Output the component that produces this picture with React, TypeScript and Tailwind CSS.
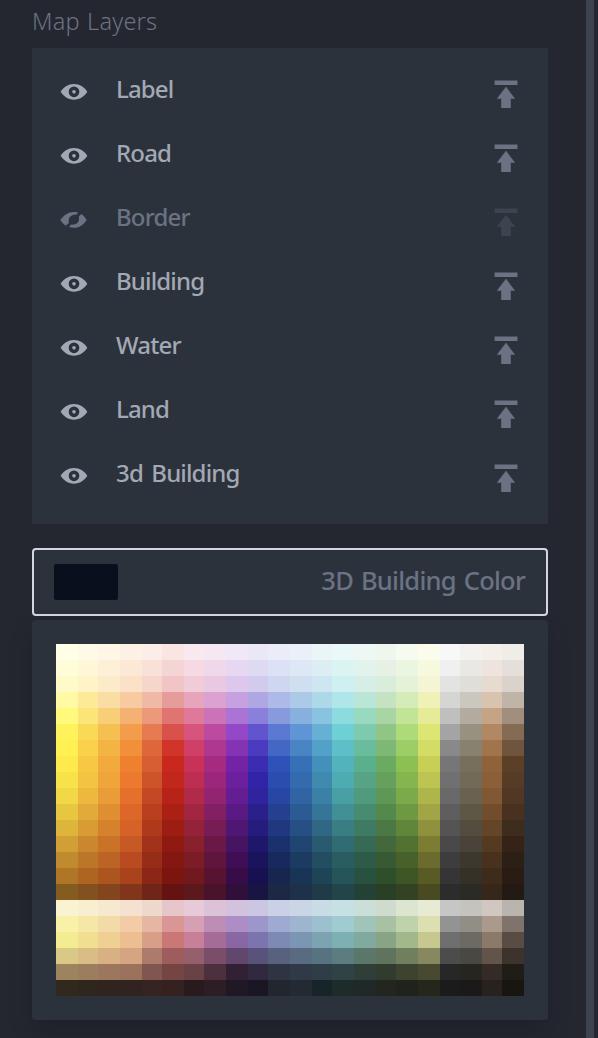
type Layer = { name: string; visible: boolean };

const layers: Layer[] = [
  { name: 'Label', visible: true },
  { name: 'Road', visible: true },
  { name: 'Border', visible: false },
  { name: 'Building', visible: true },
  { name: 'Water', visible: true },
  { name: 'Land', visible: true },
  { name: '3d Building', visible: true },
];

// One string per palette row, 22 colors each.
const palette: string[] = [
  'fffee7 fffae7 fff6e5 fdf1e6 fbede7 f9e6e3 f9e8ee f5e8f2 f0e8f6 eae8f6 eaecf8 e9f0f8 e9f5f7 e9f8f9 edf7f4 eff6ee f5fbef fbfcec f8f8f8 f3f2ee f5efea f0ece8',
  'fffcd9 fff7d8 fdf0d6 fbe8d5 f8e2d7 f3d5d6 f6d9e3 efd8ea e7d8f2 dedaf1 dce1f5 dce8f4 dceef4 daf4f4 e1f3ec e6f0e4 ebf6e1 f6f9de f0f0f0 e9e8e3 eee4dd e4dfda',
  'fffbc9 fef4c8 fcebc8 fae1c7 f6d5ca f1c4c5 f0cbd8 e9c9e2 ddc7ed d2cbee cfd6f0 cfdfef cde6f1 cff0f1 d7eee6 daeddb e4f3d7 f4f5d4 e3e3e2 dfded9 e6dbce dbd2cc',
  'fffaa3 fcea96 f9dda2 f7caa1 f0b9a5 e69c9b e6a5bb dba1d1 c6a0df aea7e3 adb9e8 adc9e8 add8e7 afe6e9 bae5d7 c5e2c3 d5ebb8 eff1b7 d5d5d4 cac7bf d7c3ae c0b3a7',
  'fff97c fbe579 f8ce77 f4b172 ec987a e07470 df7999 ca73b8 ab73d3 8a7fda 869adc 88b0dd 89c3df 8bdbdf 98d9c0 a9d5a5 c2e496 e6eb97 bfbfbf b2ab9e c4a485 a28e7e',
  'fff35c fad956 f6bf51 f29c4c e67a51 d9514b d7547f bd4aa1 9447c6 6154cd 5b79d2 6095d5 66b0d3 6ed0d5 7dcaae 91c585 addb79 dee673 a4a4a4 999180 b28764 856b54',
  'fff053 f9d14b f4b444 f18f3b de663a d1352a d03f68 b03790 8434b2 4c3bbf 4467c3 4985c3 52a1c9 5dc0c9 69bc9c 7fb775 9ccd66 d3dc64 898989 898170 a0754d 6f543e',
  'feea4c f7c943 f2a93d ee802f d75e32 c8281d c83258 a72a81 7423a6 3b2cb1 2e52b8 3670b7 4391bb 52b3bc 5aaf8d 6aaa61 8dc052 c8cf55 767676 776e5b 906239 5b3f27',
  'f8e24a f3c441 f0a53b ec792f cd532b c2271c bd2e52 9c267a 6d209d 3124a6 2a4daf 346aae 3f8aae 4cacb2 57a484 65a15c 85b54f bdc451 707070 726a57 8b6038 563c26',
  'f2d746 edb83e e99c38 e4702c c54824 b82319 b02a49 932472 651d93 2f249e 2847a5 3064a3 3b81a5 48a0a5 509b7d 5f9757 7caa4a aeb64b 696969 696250 815834 503824',
  'e8c740 e2aa3a df8e32 dc6729 b93f1f aa2015 a32641 832063 591a83 2a208b 24408f 2a5b93 357598 409095 488c70 54894d 6f9842 a1a546 5e5e5e 5d5746 724d2d 49301f',
  'ddb53b d99b34 d6822d d66228 ae391b 9d1d12 942238 781c56 4f1674 261c7d 20387f 265083 2f6784 397e82 3f7a64 4c7943 60863a 8f913c 545454 534d3f 644527 3e2c1c',
  'd0a037 ca872e cb7229 c75924 a2331a 901a11 88202e 6c1847 471363 1f176b 1b316e 204571 285a70 306c71 366a55 42683b 537231 7c7d33 494949 49433a 553a22 362317',
  'c08a2f bb7628 bb6425 ba4b21 962d17 841712 7b1c27 60153c 400e55 1b145c 182a5d 1c3b60 234d60 295d61 2e5b48 375933 48612a 6a6b2c 3d3d3d 3d382e 4a311d 2c1f15',
  'b07628 ad6521 ac561f aa421b 8c2616 7b150d 71191e 581330 370d48 181151 16264f 183556 1e4555 255558 29513f 2f4f2b 3e5624 595b25 353535 353127 3e2b1c 2a1c13',
  '855c20 83501f 83451d 81351b 702519 651312 5b181d 49142b 300f3b 191542 1c2846 1d314b 1f3b48 214549 234235 294027 334222 494922 2c2c2c 2c2a24 37271a 231a13',
  'faf3d1 f7efd0 f6e9d0 f4e1d0 eed8cc e7c6c9 e7cad8 dbc2d7 d2c2de cbc7e2 cad0e5 cad6e6 c9dbe4 c7e0e4 cbded8 cfdccd dbe5d0 e8ebd3 c6c6c6 c4c3be d1c7c0 bab4af',
  'f8f1a7 f5e7a5 f3dba7 f3cba7 e6b6a4 da9695 d79fb4 be8db5 ad8dc5 9d96cb 9faad2 9eb4cf 9dc0cf a0cbd0 a0c4b8 a8c1a4 bed3aa dce0b0 939393 918e86 ab9a8b 7e746b',
  'f3ec90 f2de91 efcf92 edbe91 d79f87 c97877 c88098 a66c99 8b66a4 7b74ae 7d8ab4 7b96b2 7da3b3 7db0b3 80aa9d 89a385 a2b78a c6c890 6f6f6f 6c6a63 8b7969 594c42',
  'dac886 d9bd84 d7b183 d5a481 ad7b6b 9e5c5c 95606d 7a4d68 61476d 59537b 58627f 596b80 587380 5c7d80 5b766b 60745d 70805f 888860 4c4c4b 494842 62544a 3d332d',
  '9e835f 9c7d5e 9c775d 9b725c 815650 744543 684246 4c303d 322135 30293f 2f3443 2f3a46 2f3e46 2f4347 2f3e39 313b2e 3c4430 484931 272727 262520 342b26 201c17',
  '31291d 2f261d 30241f 31231f 362423 35211f 291a1d 2c1e24 201925 191723 22272f 232a33 17242a 1d2b2a 202927 22261f 20231b 26271b 1b1b1b 1b1a18 28221e 19150f',
];

function EyeIcon() {
  return (
    <svg className="h-[18px] w-7 text-[#a2a8b4]" viewBox="0 0 84 54" fill="currentColor">
      <path
        fillRule="evenodd"
        d="M2 26.5C11 12 25 3 42 3s31 9 40 23.5C73 41 59 50 42 50S11 41 2 26.5ZM42 10.5a16 16 0 1 0 0 32a16 16 0 1 0 0-32Z"
      />
      <circle cx="42" cy="26.5" r="5.4" />
    </svg>
  );
}

function EyeHiddenIcon() {
  return (
    <svg className="h-[18px] w-7 text-[#6b7284]" viewBox="0 0 84 54" fill="currentColor">
      <path d="M1 27C12 12 25 3 41 3C46 3 50 3.4 54 4.3L49 11.5C35 10 26 18 26 29C26 32 26 34 26.5 36L17 44C10 39 5 33 1 27Z" />
      <path d="M64 9C71 14 76 20 80 26C70 42 58 50 42 50C36 50 31 49.4 27 48.3L34 40.5C47 43 57 35 57 24C57 21 56.5 19 56 17Z" />
    </svg>
  );
}

function MoveTopIcon({ visible }: { visible: boolean }) {
  return (
    <svg
      className={visible ? 'h-[30px] w-6 text-[#6b7284]' : 'h-[30px] w-6 text-[#3d4450]'}
      viewBox="0 0 24 30"
      fill="currentColor"
    >
      <path d="M.6 1.4h22.9v4.5H.6zM12 7.8l9.2 11.9h-4.4V29H7.2V19.7H2.8z" />
    </svg>
  );
}

export default function App() {
  return (
    <div className="flex h-[1038px] w-[598px] overflow-hidden bg-[#242730] font-['Noto_Sans',sans-serif] text-2xl">
      <main className="flex w-[586px] shrink-0 flex-col pr-[38px] pl-8">
        <h2 className="h-12 pt-[5px] text-[23.5px] leading-8 font-light tracking-[0.2px] text-[#6b7284] [word-spacing:1px]">
          Map Layers
        </h2>
        <ul className="h-[476px] bg-[#2b323c] pt-[10px] pr-[30px] pl-7">
          {layers.map(({ name, visible }) => (
            <li key={name} className="flex h-16 items-center">
              <div className="pt-[3px]">{visible ? <EyeIcon /> : <EyeHiddenIcon />}</div>
              <span
                className={
                  visible
                    ? 'ml-7 grow pb-[2px] leading-8 font-medium tracking-[-0.85px] text-[#a2a8b4] [word-spacing:3px]'
                    : 'ml-7 grow pb-[2px] leading-8 font-medium tracking-[-0.85px] text-[#6b7284]'
                }
              >
                {name}
              </span>
              <div className="pt-[7px]">
                <MoveTopIcon visible={visible} />
              </div>
            </li>
          ))}
        </ul>
        <button className="mt-6 flex h-[68px] shrink-0 items-center justify-between rounded-[4px] border-2 border-[#d3d8e0] bg-[#2b323c] pr-[21px] pl-5">
          <span className="h-9 w-16 rounded-[2px] bg-[#09101d]" />
          <span className="pb-[5px] text-[25.5px] leading-8 font-medium tracking-[-0.75px] text-[#6b7284] [word-spacing:2px]">
            3D Building Color
          </span>
        </button>
        <section className="mt-1 h-[400px] shrink-0 rounded-[4px] bg-[#2b323c] p-6 shadow-[0_12px_24px_rgba(0,0,0,0.16)]">
          {palette.map((row, i) => (
            <div
              key={i}
              className="grid h-4 grid-cols-[22px_20px_22px_22px_20px_22px_20px_22px_22px_20px_22px_22px_20px_22px_22px_20px_22px_22px_20px_22px_20px_22px]"
            >
              {row.split(' ').map((color, j) => (
                <div key={j} style={{ backgroundColor: `#${color}` }} />
              ))}
            </div>
          ))}
        </section>
      </main>
      <div className="w-2 shrink-0 bg-[#3e4350]" />
    </div>
  );
}
